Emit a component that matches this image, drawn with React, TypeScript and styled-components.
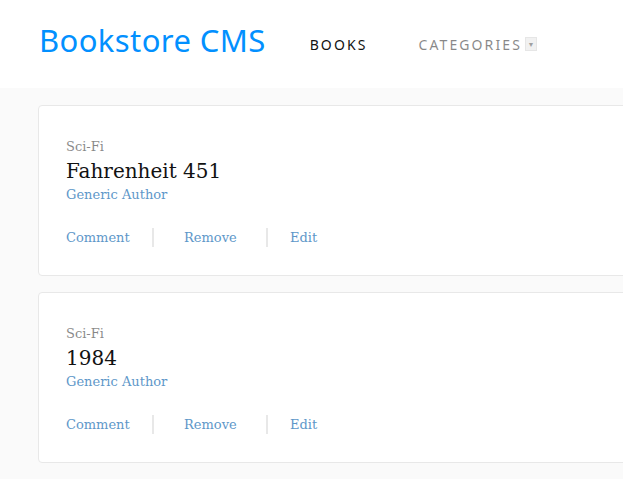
import React from "react";
import styled, { createGlobalStyle } from "styled-components";

const GlobalStyle = createGlobalStyle`
  html, body {
    margin: 0;
    padding: 0;
    overflow: hidden;
    background: #fafafa;
  }
  * { box-sizing: border-box; }
`;

const Page = styled.div`
  width: 1100px;
  min-height: 479px;
  background: #fafafa;
`;

const Header = styled.header`
  display: flex;
  align-items: center;
  height: 88px;
  padding: 0 0 8px 39px;
  background: #ffffff;
`;

const Brand = styled.h1`
  margin: 0 44px 0 0;
  font-family: "Noto Sans", sans-serif;
  font-weight: 400;
  font-size: 31px;
  letter-spacing: 0.4px;
  color: #0290ff;
`;

const Nav = styled.nav`
  display: flex;
  align-items: center;
  gap: 51px;
  margin-top: 8px;
`;

const NavLink = styled.a<{ $muted?: boolean }>`
  font-family: "Noto Sans", sans-serif;
  font-size: 14px;
  letter-spacing: 2.1px;
  text-transform: uppercase;
  color: #121212;
  opacity: ${(p) => (p.$muted ? 0.5 : 1)};
  text-decoration: none;
  display: flex;
  align-items: center;
`;

const SelectArrow = styled.span`
  display: inline-flex;
  align-items: center;
  justify-content: center;
  width: 12px;
  height: 14px;
  margin-left: 3px;
  background: #e4e4e4;
  border: 1px solid #cfcfcf;
  color: #444;
  font-size: 7px;
  letter-spacing: 0;
`;

const List = styled.main`
  display: flex;
  flex-direction: column;
  gap: 16px;
  padding: 17px 0 0 38px;
`;

const Card = styled.article`
  display: flex;
  flex-direction: column;
  height: 171px;
  padding: 32px 27px 0;
  background: #ffffff;
  border: 1px solid #e8e8e8;
  border-radius: 4px;
  font-family: "DejaVu Serif", serif;
`;

const Genre = styled.span`
  font-size: 13px;
  line-height: 18px;
  color: #121212;
  opacity: 0.5;
`;

const Title = styled.h2`
  margin: 0;
  font-size: 20px;
  line-height: 30px;
  font-weight: 400;
  color: #121212;
`;

const Author = styled.span`
  font-size: 13px;
  line-height: 18px;
  color: #4386bf;
  opacity: 0.85;
`;

const Actions = styled.div`
  display: flex;
  align-items: center;
  margin-top: 24px;
`;

const Action = styled.button<{ $w: number }>`
  width: ${(p) => p.$w}px;
  padding: 0;
  border: none;
  background: none;
  text-align: left;
  font-family: "DejaVu Serif", serif;
  font-size: 13px;
  color: #4386bf;
  opacity: 0.85;
  cursor: pointer;
`;

const Divider = styled.span<{ $after: number }>`
  width: 2px;
  height: 19px;
  margin-right: ${(p) => p.$after}px;
  background: #e8e8e8;
`;

const books = [
  { genre: "Sci-Fi", title: "Fahrenheit 451", author: "Generic Author" },
  { genre: "Sci-Fi", title: "1984", author: "Generic Author" },
];

export default function App() {
  return (
    <>
      <GlobalStyle />
      <Page>
        <Header>
          <Brand>Bookstore CMS</Brand>
          <Nav>
            <NavLink href="#">Books</NavLink>
            <NavLink href="#" $muted>
              Categories
              <SelectArrow>▼</SelectArrow>
            </NavLink>
          </Nav>
        </Header>
        <List>
          {books.map((b) => (
            <Card key={b.title}>
              <Genre>{b.genre}</Genre>
              <Title>{b.title}</Title>
              <Author>{b.author}</Author>
              <Actions>
                <Action $w={86}>Comment</Action>
                <Divider $after={30} />
                <Action $w={82}>Remove</Action>
                <Divider $after={22} />
                <Action $w={60}>Edit</Action>
              </Actions>
            </Card>
          ))}
        </List>
      </Page>
    </>
  );
}
